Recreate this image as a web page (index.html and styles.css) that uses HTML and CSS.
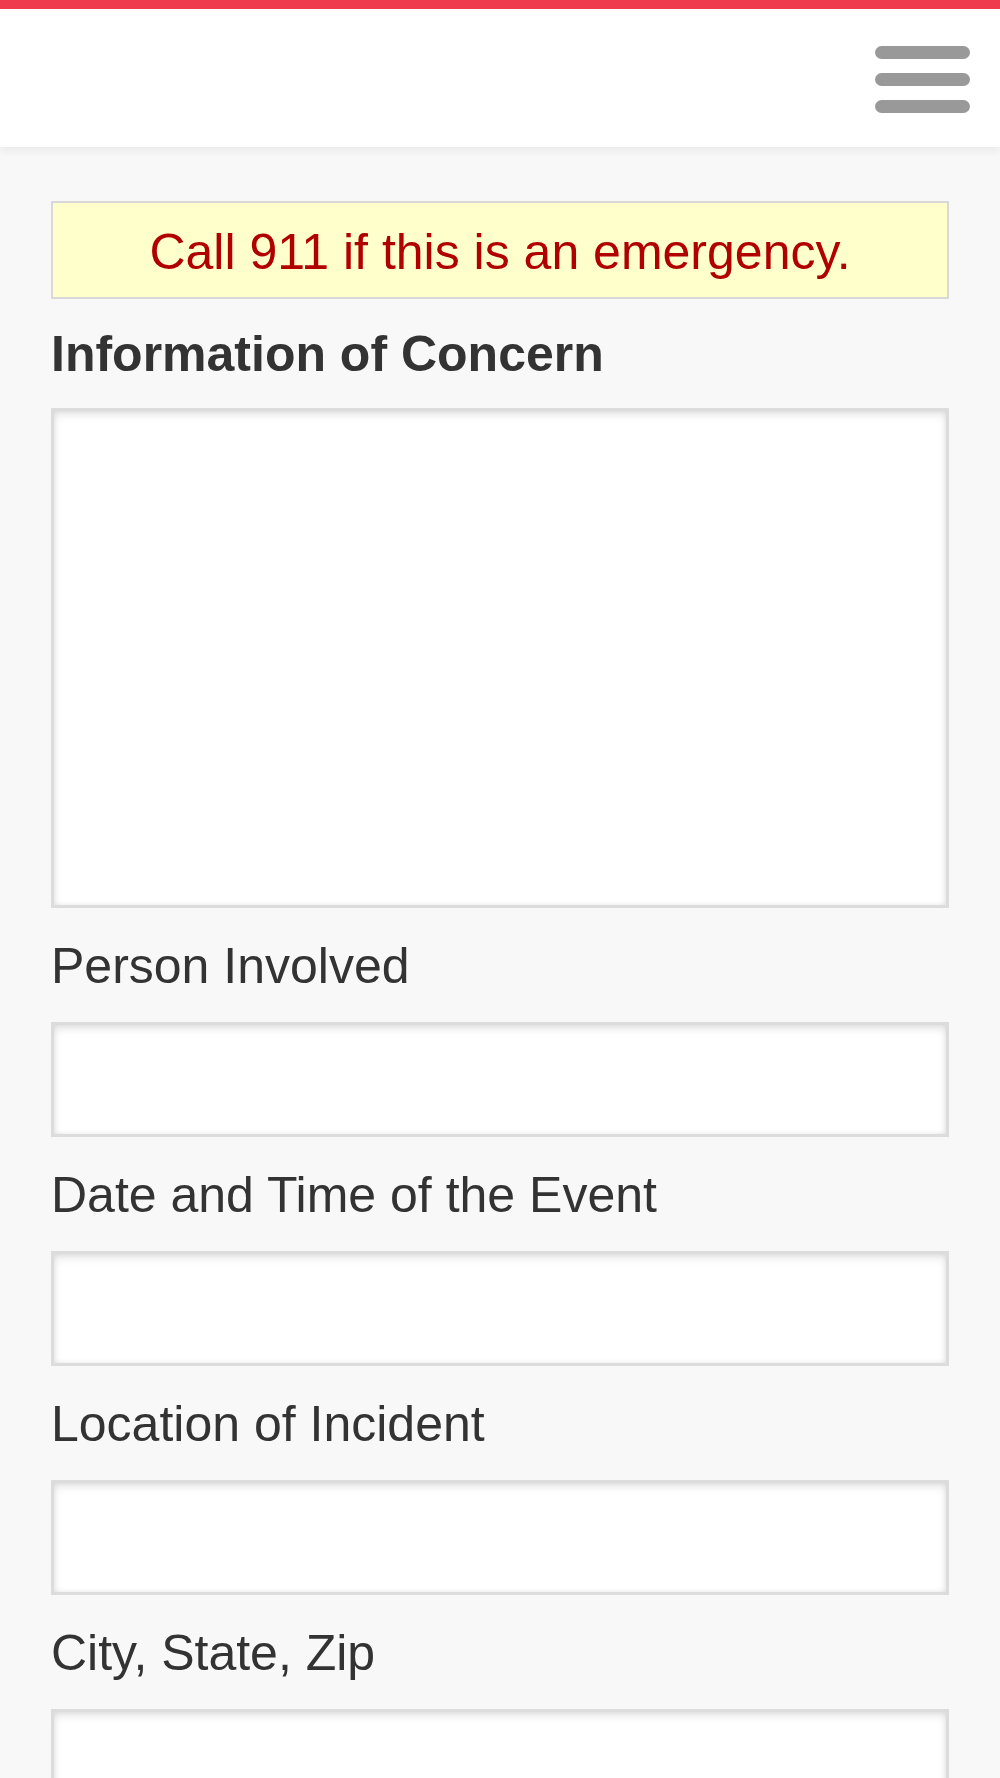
FILE: index.html
```html
<!DOCTYPE html>
<html lang="en">
<head>
  <meta charset="UTF-8">
  <meta name="viewport" content="width=device-width, initial-scale=1.0">
  <title>Report a Concern</title>
  <link rel="stylesheet" href="styles.css">
</head>
<body>
  <!-- Cabecera con menú -->
  <header class="top-bar">
    <button class="menu-toggle" type="button" aria-label="Menu">
      <span class="menu-line"></span>
      <span class="menu-line"></span>
      <span class="menu-line"></span>
    </button>
  </header>

  <!-- Formulario -->
  <main class="content">
    <div class="alert">Call 911 if this is an emergency.</div>

    <form class="concern-form">
      <label class="field-label field-label-main" for="concern">Information of Concern</label>
      <textarea class="field field-area" id="concern"></textarea>

      <label class="field-label" for="person">Person Involved</label>
      <input class="field" type="text" id="person">

      <label class="field-label" for="datetime">Date and Time of the Event</label>
      <input class="field" type="text" id="datetime">

      <label class="field-label" for="location">Location of Incident</label>
      <input class="field" type="text" id="location">

      <label class="field-label" for="city">City, State, Zip</label>
      <input class="field" type="text" id="city">
    </form>
  </main>
</body>
</html>
```

FILE: styles.css
```css
html, body {
  margin: 0;
  background-color: #f8f8f8;
  font-family: "Liberation Sans", Arial, Helvetica, sans-serif;
  color: #333;
}

.top-bar {
  height: 147px;
  box-sizing: border-box;
  background-color: #fff;
  border-top: 9px solid #ee3a4c;
  box-shadow: 0 3px 10px rgba(0, 0, 0, 0.07);
  display: flex;
  justify-content: flex-end;
  align-items: flex-start;
  padding: 37px 30px 0 0;
  position: relative;
}

.menu-toggle {
  display: flex;
  flex-direction: column;
  gap: 14px;
  padding: 0;
  margin: 0;
  border: none;
  background: none;
  cursor: pointer;
}

.menu-line {
  display: block;
  width: 95px;
  height: 13px;
  border-radius: 7px;
  background-color: #999;
}

.content {
  padding: 54px 51px 0;
}

.alert {
  background-color: #ffffcc;
  border: 2px solid #d8d8d8;
  color: #b00000;
  font-size: 50px;
  line-height: 90px;
  padding-top: 4px;
  text-align: center;
}

.concern-form {
  display: flex;
  flex-direction: column;
}

.field-label {
  display: block;
  font-size: 50px;
  line-height: 60px;
  margin: 28px 0 26px;
}

.field-label-main {
  font-weight: bold;
  margin: 25px 0 24px;
}

.field {
  display: block;
  width: 100%;
  height: 115px;
  box-sizing: border-box;
  margin: 0;
  padding: 10px 16px;
  border: 3px solid #dcdcdc;
  border-radius: 0;
  background-color: #fff;
  box-shadow: inset 0 4px 8px rgba(0, 0, 0, 0.1), inset 0 0 5px rgba(0, 0, 0, 0.08);
  font-family: inherit;
  font-size: 40px;
  color: #333;
  -webkit-appearance: none;
  appearance: none;
  outline: none;
}

.field-area {
  height: 500px;
  resize: none;
}
```
